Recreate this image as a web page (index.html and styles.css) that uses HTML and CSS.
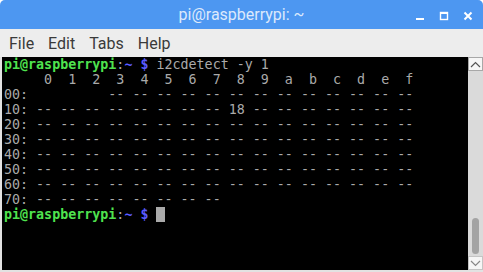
FILE: index.html
```html
<!DOCTYPE html>
<html>
<head>
<meta charset="utf-8">
<link rel="stylesheet" href="styles.css">
</head>
<body>
<div class="window">
  <div class="titlebar">
    <div class="title">pi@raspberrypi: ~</div>
    <div class="controls">
      <svg class="ctl" width="10" height="10" viewBox="0 0 10 10"><rect x="1" y="7" width="8" height="2" fill="#fff"/></svg>
      <svg class="ctl" width="10" height="10" viewBox="0 0 10 10"><rect x="1.5" y="1.5" width="7" height="7" fill="none" stroke="#fff" stroke-width="1.4"/><rect x="1" y="1" width="8" height="2" fill="#fff"/></svg>
      <svg class="ctl" width="10" height="10" viewBox="0 0 10 10"><path d="M1.5 1.5 L8.5 8.5 M8.5 1.5 L1.5 8.5" stroke="#fff" stroke-width="2"/></svg>
    </div>
  </div>
  <div class="menubar">
    <span class="menu">File</span>
    <span class="menu">Edit</span>
    <span class="menu">Tabs</span>
    <span class="menu">Help</span>
  </div>
  <div class="content">
    <pre class="term"><span class="u">pi@raspberrypi</span>:<span class="d">~ $</span> i2cdetect -y 1
     0  1  2  3  4  5  6  7  8  9  a  b  c  d  e  f
00:          -- -- -- -- -- -- -- -- -- -- -- -- -- 
10: -- -- -- -- -- -- -- -- 18 -- -- -- -- -- -- -- 
20: -- -- -- -- -- -- -- -- -- -- -- -- -- -- -- -- 
30: -- -- -- -- -- -- -- -- -- -- -- -- -- -- -- -- 
40: -- -- -- -- -- -- -- -- -- -- -- -- -- -- -- -- 
50: -- -- -- -- -- -- -- -- -- -- -- -- -- -- -- -- 
60: -- -- -- -- -- -- -- -- -- -- -- -- -- -- -- -- 
70: -- -- -- -- -- -- -- --                         
<span class="u">pi@raspberrypi</span>:<span class="d">~ $</span> <span class="cursor"> </span></pre>
    <div class="scrollbar">
      <div class="sbtn"><svg width="11" height="7" viewBox="0 0 11 7"><path d="M1 6 L5.5 1.5 L10 6" fill="none" stroke="#555" stroke-width="1.2"/></svg></div>
      <div class="track"><div class="thumb"></div></div>
      <div class="sbtn"><svg width="11" height="7" viewBox="0 0 11 7"><path d="M1 1 L5.5 5.5 L10 1" fill="none" stroke="#888" stroke-width="1.2"/></svg></div>
    </div>
  </div>
</div>
</body>
</html>
```
FILE: styles.css
```css
html, body {
  margin: 0;
  padding: 0;
  background: #ffffff;
}
.window {
  width: 483px;
  height: 272px;
  display: flex;
  flex-direction: column;
  overflow: hidden;
  border-radius: 5px 5px 0 0;
  background: #ededed;
}
.titlebar {
  height: 29px;
  flex: none;
  background: #4d97f1;
  display: flex;
  align-items: center;
  justify-content: center;
  position: relative;
}
.title {
  font-family: Roboto, "Liberation Sans", sans-serif;
  font-size: 16px;
  color: #dce9fc;
  margin-left: 0;
}
.controls {
  position: absolute;
  right: 10px;
  top: 11px;
  display: flex;
  gap: 14px;
}
.ctl {
  display: block;
}
.menubar {
  height: 28px;
  flex: none;
  background: #ededed;
  display: flex;
  align-items: center;
  padding-left: 2px;
  font-family: Roboto, "Liberation Sans", sans-serif;
  font-size: 16px;
  color: #3a3a3a;
}
.menu {
  padding: 0 7px;
}
.content {
  flex: 1;
  display: flex;
  padding-left: 2px;
  padding-bottom: 2px;
  background: #e2e2e2;
}
.term {
  flex: 1;
  margin: 0;
  background: #000;
  color: #aaaaaa;
  font-family: "DejaVu Sans Mono", monospace;
  font-size: 13.33px;
  line-height: 15px;
  padding: 0 0 0 2px;
  overflow: hidden;
  white-space: pre;
}
.u {
  color: #4fe34f;
  font-weight: bold;
}
.d {
  color: #5b5bff;
  font-weight: bold;
}
.cursor {
  background: #aaaaaa;
}
.scrollbar {
  width: 15px;
  flex: none;
  display: flex;
  flex-direction: column;
  background: #dadada;
}
.sbtn {
  height: 12px;
  flex: none;
  border: 1px solid #a8a8a8;
  background: #f6f6f6;
  display: flex;
  align-items: center;
  justify-content: center;
  box-sizing: content-box;
  width: 13px;
}
.sbtn:last-child {
  border-color: #c4c4c4;
}
.track {
  flex: 1;
  display: flex;
  flex-direction: column;
  justify-content: flex-end;
  align-items: center;
  padding-bottom: 2px;
}
.thumb {
  width: 7px;
  height: 36px;
  border-radius: 4px;
  background: #a3a3a3;
}
```
